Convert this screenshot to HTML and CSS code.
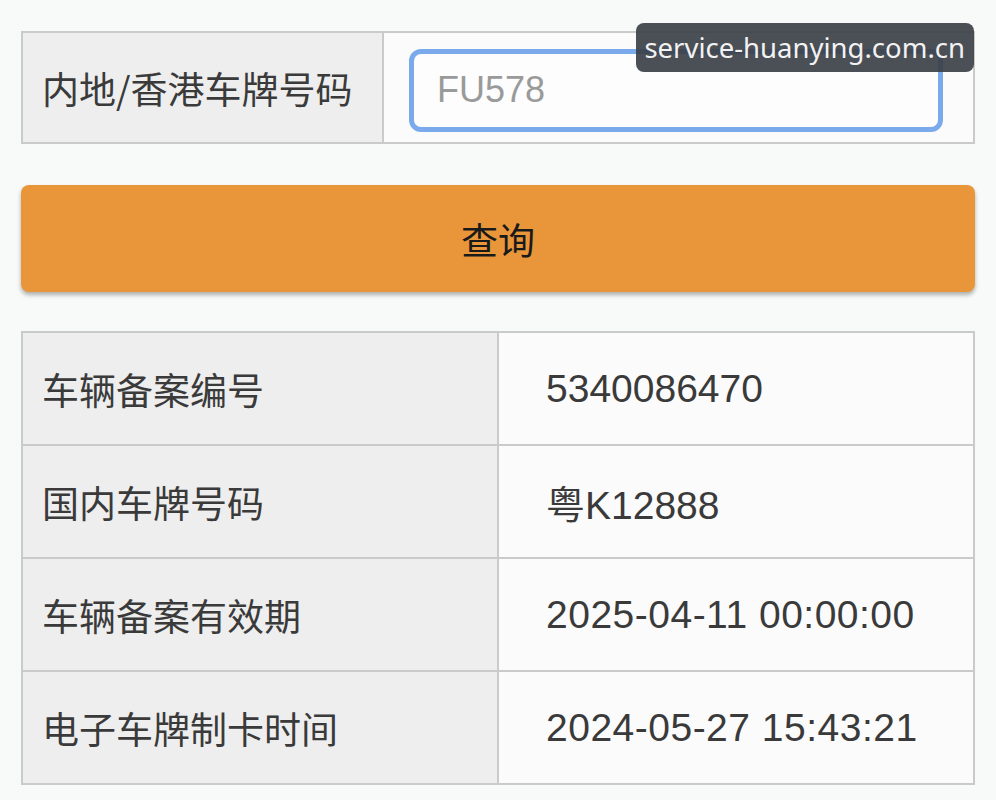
FILE: index.html
```html
<!DOCTYPE html>
<html lang="zh-CN">
<head>
    <meta charset="UTF-8">
    <meta name="viewport" content="width=device-width, initial-scale=1.0">
    <title>车辆备案查询</title>
    <link rel="stylesheet" href="styles.css">
</head>
<body>
    <div class="page">
        <table class="query-table">
            <tr>
                <td class="label-cell query-label">内地/香港车牌号码</td>
                <td class="input-cell">
                    <input type="text" id="plateNo" placeholder="FU578">
                </td>
            </tr>
        </table>

        <button type="button" class="query-btn">查询</button>

        <table class="result-table">
            <tr>
                <td class="label-cell">车辆备案编号</td>
                <td class="value-cell">5340086470</td>
            </tr>
            <tr>
                <td class="label-cell">国内车牌号码</td>
                <td class="value-cell">粤K12888</td>
            </tr>
            <tr>
                <td class="label-cell">车辆备案有效期</td>
                <td class="value-cell date">2025-04-11 00:00:00</td>
            </tr>
            <tr>
                <td class="label-cell">电子车牌制卡时间</td>
                <td class="value-cell date">2024-05-27 15:43:21</td>
            </tr>
        </table>
    </div>

    <div class="watermark">service-huanying.com.cn</div>
</body>
</html>
```

FILE: styles.css
```css
body {
    margin: 0;
    background-color: #f8f9f9;
    font-family: "Liberation Sans", "Noto Sans CJK SC", sans-serif;
    color: #333;
}
.page {
    padding: 31px 21px 0;
}
table {
    width: 100%;
    border-collapse: collapse;
    border: 2px solid #cacaca;
}
td {
    border: 2px solid #cacaca;
    padding: 0;
}
.label-cell {
    background-color: #eeeeee;
    font-family: "Noto Sans CJK SC", sans-serif;
    font-size: 37px;
    color: #3a3a3a;
    padding-left: 19px;
}
.query-table td {
    height: 104px;
}
.query-label {
    width: 340px;
}
.input-cell {
    background-color: #fbfbfb;
    padding: 5px 30px 0 25px;
}
.input-cell input {
    display: block;
    width: 100%;
    height: 83px;
    box-sizing: border-box;
    border: 5px solid #7aa9ec;
    border-radius: 12px;
    padding: 0 0 0 23px;
    font-family: "Liberation Sans", sans-serif;
    font-size: 36px;
    color: #333;
    background-color: #fdfdfd;
    outline: none;
}
.input-cell input::placeholder {
    color: #9a9a9a;
}
.query-btn {
    display: block;
    width: 100%;
    height: 107px;
    margin: 41px 0 39px;
    border: none;
    border-radius: 8px;
    background-color: #e9963a;
    box-shadow: 0 3px 4px rgba(0,0,0,0.3);
    font-family: "Noto Sans CJK SC", sans-serif;
    font-size: 37px;
    color: #1a1a1a;
    cursor: pointer;
}
.result-table td {
    height: 111px;
}
.result-table .label-cell {
    width: 455px;
}
.value-cell {
    background-color: #fbfbfb;
    padding-left: 47px;
    font-size: 39px;
    color: #3a3a3a;
}
.value-cell.date {
    letter-spacing: 0.5px;
}
.watermark {
    position: absolute;
    top: 23px;
    right: 22px;
    height: 49px;
    padding: 0 9px 0 8px;
    border-radius: 8px;
    background-color: rgba(60,64,72,0.92);
    color: #f2f2f2;
    font-family: "Noto Sans", sans-serif;
    font-size: 27.5px;
    line-height: 49px;
}
```
